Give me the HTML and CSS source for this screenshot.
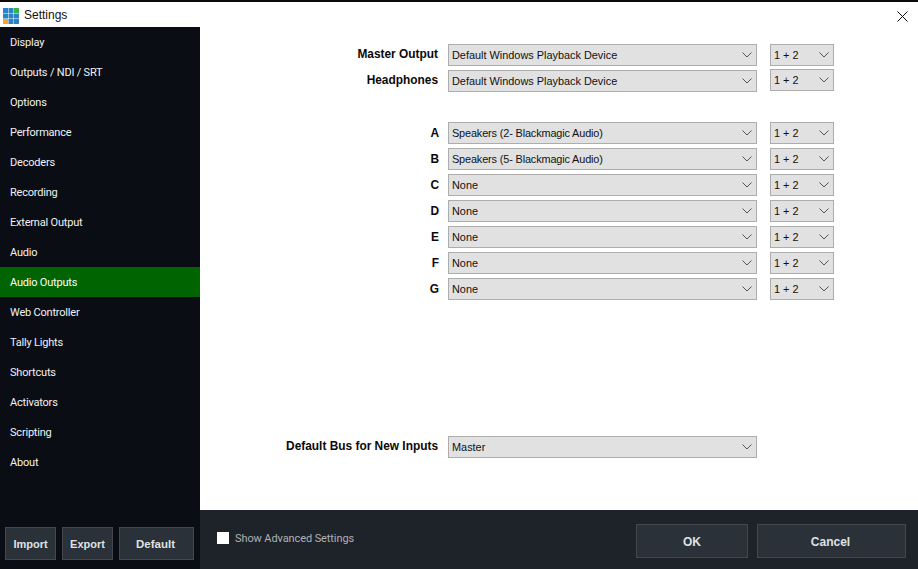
FILE: index.html
```html
<!DOCTYPE html>
<html lang="en">
<head>
<meta charset="utf-8">
<title>Settings</title>
<link rel="stylesheet" href="styles.css">
</head>
<body>
<div class="window">
  <header class="titlebar">
    <svg class="app-icon" width="16" height="16" viewBox="0 0 16 16">
      <rect x="0" y="0" width="5" height="5" fill="#2a82c8"/><rect x="5.5" y="0" width="5" height="5" fill="#2a82c8"/><rect x="11" y="0" width="5" height="5" fill="#3cb04a"/>
      <rect x="0" y="5.5" width="5" height="5" fill="#2a82c8"/><rect x="5.5" y="5.5" width="5" height="5" fill="#2a82c8"/><rect x="11" y="5.5" width="5" height="5" fill="#2a82c8"/>
      <rect x="0" y="11" width="5" height="5" fill="#f5a623"/><rect x="5.5" y="11" width="5" height="5" fill="#2a82c8"/><rect x="11" y="11" width="5" height="5" fill="#2a82c8"/>
    </svg>
    <span class="title">Settings</span>
    <svg class="close" width="11" height="11" viewBox="0 0 11 11"><path d="M.5.5l10 10M10.5.5l-10 10" stroke="#111" fill="none"/></svg>
  </header>
  <div class="body">
    <aside class="sidebar">
      <nav class="menu">
        <div class="item">Display</div>
        <div class="item">Outputs / NDI / SRT</div>
        <div class="item">Options</div>
        <div class="item">Performance</div>
        <div class="item">Decoders</div>
        <div class="item">Recording</div>
        <div class="item">External Output</div>
        <div class="item">Audio</div>
        <div class="item active">Audio Outputs</div>
        <div class="item">Web Controller</div>
        <div class="item">Tally Lights</div>
        <div class="item">Shortcuts</div>
        <div class="item">Activators</div>
        <div class="item">Scripting</div>
        <div class="item">About</div>
      </nav>
      <div class="side-buttons">
        <button class="btn small">Import</button>
        <button class="btn small">Export</button>
        <button class="btn wide">Default</button>
      </div>
    </aside>
    <div class="panel">
      <main class="content">
        <section class="group">
          <div class="row"><label>Master Output</label><div class="select device"><span>Default Windows Playback Device</span><svg width="10" height="6" viewBox="0 0 10 6"><path d="M.5.5l4.5 4.5 4.5-4.5" stroke="#555" fill="none"/></svg></div><div class="select channel"><span>1 + 2</span><svg width="10" height="6" viewBox="0 0 10 6"><path d="M.5.5l4.5 4.5 4.5-4.5" stroke="#555" fill="none"/></svg></div></div>
          <div class="row"><label>Headphones</label><div class="select device"><span>Default Windows Playback Device</span><svg width="10" height="6" viewBox="0 0 10 6"><path d="M.5.5l4.5 4.5 4.5-4.5" stroke="#555" fill="none"/></svg></div><div class="select channel raised"><span>1 + 2</span><svg width="10" height="6" viewBox="0 0 10 6"><path d="M.5.5l4.5 4.5 4.5-4.5" stroke="#555" fill="none"/></svg></div></div>
        </section>
        <section class="group buses">
          <div class="row"><label>A</label><div class="select device"><span class="tight">Speakers (2- Blackmagic Audio)</span><svg width="10" height="6" viewBox="0 0 10 6"><path d="M.5.5l4.5 4.5 4.5-4.5" stroke="#555" fill="none"/></svg></div><div class="select channel"><span>1 + 2</span><svg width="10" height="6" viewBox="0 0 10 6"><path d="M.5.5l4.5 4.5 4.5-4.5" stroke="#555" fill="none"/></svg></div></div>
          <div class="row"><label>B</label><div class="select device"><span class="tight">Speakers (5- Blackmagic Audio)</span><svg width="10" height="6" viewBox="0 0 10 6"><path d="M.5.5l4.5 4.5 4.5-4.5" stroke="#555" fill="none"/></svg></div><div class="select channel"><span>1 + 2</span><svg width="10" height="6" viewBox="0 0 10 6"><path d="M.5.5l4.5 4.5 4.5-4.5" stroke="#555" fill="none"/></svg></div></div>
          <div class="row"><label>C</label><div class="select device"><span>None</span><svg width="10" height="6" viewBox="0 0 10 6"><path d="M.5.5l4.5 4.5 4.5-4.5" stroke="#555" fill="none"/></svg></div><div class="select channel"><span>1 + 2</span><svg width="10" height="6" viewBox="0 0 10 6"><path d="M.5.5l4.5 4.5 4.5-4.5" stroke="#555" fill="none"/></svg></div></div>
          <div class="row"><label>D</label><div class="select device"><span>None</span><svg width="10" height="6" viewBox="0 0 10 6"><path d="M.5.5l4.5 4.5 4.5-4.5" stroke="#555" fill="none"/></svg></div><div class="select channel"><span>1 + 2</span><svg width="10" height="6" viewBox="0 0 10 6"><path d="M.5.5l4.5 4.5 4.5-4.5" stroke="#555" fill="none"/></svg></div></div>
          <div class="row"><label>E</label><div class="select device"><span>None</span><svg width="10" height="6" viewBox="0 0 10 6"><path d="M.5.5l4.5 4.5 4.5-4.5" stroke="#555" fill="none"/></svg></div><div class="select channel"><span>1 + 2</span><svg width="10" height="6" viewBox="0 0 10 6"><path d="M.5.5l4.5 4.5 4.5-4.5" stroke="#555" fill="none"/></svg></div></div>
          <div class="row"><label>F</label><div class="select device"><span>None</span><svg width="10" height="6" viewBox="0 0 10 6"><path d="M.5.5l4.5 4.5 4.5-4.5" stroke="#555" fill="none"/></svg></div><div class="select channel"><span>1 + 2</span><svg width="10" height="6" viewBox="0 0 10 6"><path d="M.5.5l4.5 4.5 4.5-4.5" stroke="#555" fill="none"/></svg></div></div>
          <div class="row"><label>G</label><div class="select device"><span>None</span><svg width="10" height="6" viewBox="0 0 10 6"><path d="M.5.5l4.5 4.5 4.5-4.5" stroke="#555" fill="none"/></svg></div><div class="select channel"><span>1 + 2</span><svg width="10" height="6" viewBox="0 0 10 6"><path d="M.5.5l4.5 4.5 4.5-4.5" stroke="#555" fill="none"/></svg></div></div>
        </section>
        <section class="group default-bus">
          <div class="row"><label>Default Bus for New Inputs</label><div class="select device"><span>Master</span><svg width="10" height="6" viewBox="0 0 10 6"><path d="M.5.5l4.5 4.5 4.5-4.5" stroke="#555" fill="none"/></svg></div></div>
        </section>
      </main>
      <footer class="footer">
        <div class="advanced"><span class="check"></span><span>Show Advanced Settings</span></div>
        <div class="actions">
          <button class="btn ok">OK</button>
          <button class="btn cancel">Cancel</button>
        </div>
      </footer>
    </div>
  </div>
</div>
</body>
</html>
```
FILE: styles.css
```css
* { box-sizing: border-box; }
html, body { margin: 0; padding: 0; }
body { font-family: "Liberation Sans", Arial, sans-serif; font-size: 11.5px; background: #fff; }
.window { width: 918px; height: 569px; display: flex; flex-direction: column; overflow: hidden; border-top: 2px solid #0a0a0a; }
.titlebar { height: 25px; flex: none; display: flex; align-items: center; padding: 0 10px 0 3px; background: #fff; }
.app-icon { margin-top: 3px; flex: none; }
.title { margin-left: 5px; font-size: 12px; color: #111; }
.close { margin-left: auto; margin-top: 3px; }
.body { flex: 1; display: flex; min-height: 0; }
.sidebar { width: 200px; flex: none; display: flex; flex-direction: column; justify-content: space-between; background: #0a0d14; padding-bottom: 9px; }
.item { height: 30px; display: flex; align-items: center; padding-left: 10px; color: #f2f2f2; font-family: Roboto, "Liberation Sans", sans-serif; font-size: 11px; letter-spacing: -0.2px; }
.item.active { background: #006400; color: #fff; }
.side-buttons { display: flex; gap: 6px; padding-left: 5px; }
.btn { font-family: inherit; font-weight: 700; font-size: 11px; color: #dfe2e5; background: #2a3138; border: 1px solid #414850; padding: 0; }
.btn.small { width: 51px; height: 33px; }
.btn.wide { width: 75px; height: 33px; font-size: 11.5px; padding-right: 2px; }
.panel { flex: 1; display: flex; flex-direction: column; min-width: 0; }
.content { flex: 1; background: #fff; padding-top: 17px; display: flex; flex-direction: column; }
.group { display: flex; flex-direction: column; gap: 4px; }
.buses { margin-top: 30px; }
.default-bus { margin-top: 136px; }
.row { display: flex; align-items: center; height: 22px; padding-left: 10px; }
.row label { width: 228px; text-align: right; font-weight: 700; font-size: 11.9px; color: #0a0a0a; margin-top: -2px; }
.buses .row label { margin-top: 0; width: 229px; }
.select { display: flex; align-items: center; justify-content: space-between; height: 22px; background: #e1e1e1; border: 1px solid #adadad; font-size: 10.9px; color: #111; padding: 0 3px; }
.device { width: 309px; margin-left: 10px; }
.buses .device { margin-left: 9px; }
.channel { width: 64px; margin-left: 13px; }
.channel.raised { margin-top: -2px; }
.select span { white-space: nowrap; }
.select .tight { letter-spacing: -0.14px; }
.select svg { flex: none; margin-right: 1px; }
.footer { height: 59px; flex: none; background: #1e2229; display: flex; align-items: flex-start; justify-content: space-between; padding: 14px 12px 0 17px; }
.advanced { display: flex; align-items: center; gap: 6px; height: 28px; color: #aeb2b6; font-family: Roboto, "Liberation Sans", sans-serif; font-size: 11px; letter-spacing: -0.1px; }
.check { width: 12px; height: 12px; background: #fff; display: block; }
.actions { display: flex; gap: 9px; }
.btn.ok { width: 112px; height: 34px; font-size: 12px; padding-top: 2px; }
.btn.cancel { width: 149px; height: 34px; font-size: 12px; padding: 2px 2px 0 0; }
```
